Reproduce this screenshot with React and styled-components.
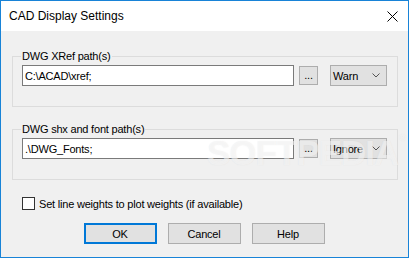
import React from "react";
import styled, { createGlobalStyle } from "styled-components";

const Global = createGlobalStyle`
  html, body { margin: 0; padding: 0; background: #f0f0f0; }
  #root { width: 409px; height: 258px; }
  * { box-sizing: border-box; }
`;

const Window = styled.div`
  position: relative;
  width: 409px;
  height: 258px;
  border: 1px solid #1883d7;
  background: #f0f0f0;
  display: flex;
  flex-direction: column;
  font-family: "Liberation Sans", Arial, sans-serif;
  font-size: 11px;
  letter-spacing: -0.2px;
  color: #000;
  overflow: hidden;
`;

const TitleBar = styled.div`
  height: 30px;
  background: #fff;
  display: flex;
  align-items: center;
  justify-content: space-between;
  padding: 0 9px 0 8px;
  flex-shrink: 0;
`;

const Title = styled.div`
  font-family: "Liberation Sans", "Segoe UI", sans-serif;
  font-size: 12px;
  letter-spacing: 0;
  color: #000;
`;

const Close = styled.svg`
  width: 11px;
  height: 11px;
  margin-right: 1px;
`;

const Body = styled.div`
  flex: 1;
  display: flex;
  flex-direction: column;
  padding: 25px 10px 0 11px;
`;

const Group = styled.div`
  border: 1px solid #dcdcdc;
  height: 51px;
  display: flex;
  flex-direction: column;
  margin-bottom: ${(p) => p.$mb || 0}px;
`;

const Legend = styled.div`
  align-self: flex-start;
  margin: -7px 0 0 8px;
  padding: 0 1px;
  background: #f0f0f0;
  line-height: 13px;
  height: 13px;
`;

const Row = styled.div`
  display: flex;
  align-items: center;
  margin: 2px 0 0 9px;
`;

const TextBox = styled.div`
  width: 272px;
  height: 21px;
  border: 1px solid #7a7a7a;
  background: #fff;
  display: flex;
  align-items: center;
  padding-left: 2px;
`;

const DotsButton = styled.div`
  width: 19px;
  height: 19px;
  margin-left: 5px;
  border: 1px solid #adadad;
  background: #e1e1e1;
  display: flex;
  align-items: flex-end;
  justify-content: center;
  padding-bottom: 3px;
  font-size: 11px;
  line-height: 11px;
`;

const Combo = styled.div`
  width: 57px;
  height: 21px;
  margin-left: 12px;
  border: 1px solid #adadad;
  background: #e1e1e1;
  display: flex;
  align-items: center;
  justify-content: space-between;
  padding: 0 6px 0 2px;
`;

const Chevron = styled.svg`
  width: 8px;
  height: 5px;
`;

const CheckRow = styled.div`
  display: flex;
  align-items: center;
  margin: 17px 0 0 10px;
  gap: 4px;
`;

const Box = styled.div`
  width: 13px;
  height: 13px;
  border: 1px solid #333;
  background: #fff;
`;

const Buttons = styled.div`
  display: flex;
  justify-content: center;
  gap: 11px;
  margin-top: 13px;
  padding-right: 2px;
`;

const Button = styled.div`
  width: 73px;
  height: 21px;
  border: ${(p) => (p.$default ? "2px solid #0078d7" : "1px solid #adadad")};
  background: #e1e1e1;
  display: flex;
  align-items: center;
  justify-content: center;
`;

const Watermark = styled.div`
  position: absolute;
  left: 206px;
  top: 132px;
  font-family: "Liberation Sans", Arial, sans-serif;
  font-weight: bold;
  font-size: 35px;
  letter-spacing: -1px;
  color: rgba(255, 255, 255, 0.5);
  text-shadow: 0 0 1px rgba(180, 180, 180, 0.25);
  pointer-events: none;
  sup {
    font-size: 9px;
    vertical-align: top;
    margin-left: 1px;
  }
`;

function PathGroup({ label, value, mode, mb }) {
  return (
    <Group $mb={mb}>
      <Legend>{label}</Legend>
      <Row>
        <TextBox>{value}</TextBox>
        <DotsButton>...</DotsButton>
        <Combo>
          <span>{mode}</span>
          <Chevron viewBox="0 0 8 5">
            <path d="M0.5 0.5 L4 4 L7.5 0.5" fill="none" stroke="#555" strokeWidth="1" />
          </Chevron>
        </Combo>
      </Row>
    </Group>
  );
}

export default function App() {
  return (
    <>
      <Global />
      <Window>
        <TitleBar>
          <Title>CAD Display Settings</Title>
          <Close viewBox="0 0 11 11">
            <path d="M0.5 0.5 L10.5 10.5 M10.5 0.5 L0.5 10.5" stroke="#000" strokeWidth="1" />
          </Close>
        </TitleBar>
        <Body>
          <PathGroup label="DWG XRef path(s)" value="C:\ACAD\xref;" mode="Warn" mb={22} />
          <PathGroup label="DWG shx and font path(s)" value=".\DWG_Fonts;" mode="Ignore" />
          <CheckRow>
            <Box />
            <span>Set line weights to plot weights (if available)</span>
          </CheckRow>
          <Buttons>
            <Button $default>OK</Button>
            <Button>Cancel</Button>
            <Button>Help</Button>
          </Buttons>
        </Body>
        <Watermark>
          SOFTPEDIA<sup>®</sup>
        </Watermark>
      </Window>
    </>
  );
}
